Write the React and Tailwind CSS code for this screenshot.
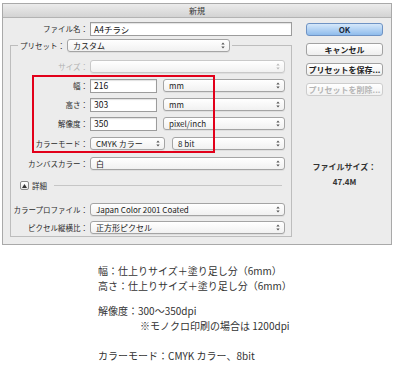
const font = { fontFamily: '"Noto Sans CJK JP", "Liberation Sans", sans-serif' };

function Arrows({ dim }) {
  const c = dim ? "#b8b8b8" : "#555";
  return (
    <svg width="4" height="7" viewBox="0 0 4 7" className="shrink-0">
      <path d="M0.3 2.6 L2 0.6 L3.7 2.6 Z" fill={c} />
      <path d="M0.3 4.4 L2 6.4 L3.7 4.4 Z" fill={c} />
    </svg>
  );
}

function Select({ w, text, dim }) {
  return (
    <div
      className={`${w} h-[13px] rounded-[3px] border ${
        dim ? "border-[#c9c9c9] text-[#aaa]" : "border-[#a4a4a4] text-[#222]"
      } bg-gradient-to-b from-white to-[#f1f1f1] shadow-[0_1px_0_rgba(0,0,0,0.06)] flex items-center justify-between pl-[5px] pr-[4px] text-[8px] leading-none whitespace-nowrap`}
    >
      <span>{text}</span>
      <Arrows dim={dim} />
    </div>
  );
}

function Input({ w, value }) {
  return (
    <div
      className={`${w} h-[14px] border border-[#9c9c9c] bg-white shadow-[inset_0_1px_1px_rgba(0,0,0,0.12)] flex items-center pl-[3px] text-[8.5px] leading-none text-[#111]`}
    >
      {value}
    </div>
  );
}

function Label({ w, children, dim }) {
  return (
    <div
      className={`${w} shrink-0 text-right text-[7.5px] leading-none pr-[1px] whitespace-nowrap ${
        dim ? "text-[#b0b0b0]" : "text-[#2a2a2a]"
      }`}
    >
      {children}
    </div>
  );
}

function Row({ mt, label, dim, children }) {
  return (
    <div className={`flex items-center h-[13px] ${mt}`}>
      <Label w="w-[78px]" dim={dim}>
        {label}
      </Label>
      <div className="flex items-center ml-[1px]">{children}</div>
    </div>
  );
}

function Button({ children, primary, dim }) {
  return (
    <div
      className={`h-[13px] w-[77px] rounded-[3px] border flex items-center justify-center text-[8px] leading-none font-bold ${
        primary
          ? "border-[#6f93c4] bg-gradient-to-b from-[#d6e8fa] to-[#8fbcec] text-[#1b2a3c]"
          : dim
          ? "border-[#cdcdcd] bg-gradient-to-b from-white to-[#f2f2f2] text-[#b5b5b5]"
          : "border-[#a2a2a2] bg-gradient-to-b from-white to-[#efefef] text-[#222]"
      }`}
    >
      {children}
    </div>
  );
}

export default function App() {
  return (
    <div className="w-[396px] h-[367px] bg-white overflow-hidden relative" style={font}>
      {/* dialog */}
      <div className="ml-[2px] mt-[3px] w-[390px] h-[242px] border border-[#a9a9a9] bg-[#ececec] flex flex-col">
        <div className="h-[14px] border-b border-[#b3b3b3] bg-gradient-to-b from-[#ececec] to-[#d3d3d3] flex items-center justify-center text-[8px] leading-none text-[#333]">
          新規
        </div>

        <div className="flex">
          {/* left column */}
          <div className="w-[290px] pt-[4px]">
            <div className="flex items-center h-[14px]">
              <Label w="w-[86px]">ファイル名：</Label>
              <div className="ml-[1px]">
                <Input w="w-[202px]" value="A4チラシ" />
              </div>
            </div>

            <fieldset className="ml-[7px] mt-[3px] w-[282px] border border-[#bdbdbd] pb-[2px]">
              <legend className="ml-[7px] px-[2px] flex items-center">
                <span className="text-[7.5px] leading-none text-[#2a2a2a]">プリセット：</span>
                <div className="ml-[2px]">
                  <Select w="w-[163px]" text="カスタム" />
                </div>
              </legend>

              <Row mt="mt-[8px]" label="サイズ：" dim>
                <Select w="w-[195px]" text="" dim />
              </Row>
              <Row mt="mt-[6px]" label="幅：">
                <Input w="w-[67px]" value="216" />
                <div className="ml-[6px]">
                  <Select w="w-[122px]" text="mm" />
                </div>
              </Row>
              <Row mt="mt-[6px]" label="高さ：">
                <Input w="w-[67px]" value="303" />
                <div className="ml-[6px]">
                  <Select w="w-[122px]" text="mm" />
                </div>
              </Row>
              <Row mt="mt-[6px]" label="解像度：">
                <Input w="w-[67px]" value="350" />
                <div className="ml-[6px]">
                  <Select w="w-[122px]" text="pixel/inch" />
                </div>
              </Row>
              <Row mt="mt-[7px]" label="カラーモード：">
                <Select w="w-[75px]" text="CMYK カラー" />
                <div className="ml-[7px]">
                  <Select w="w-[113px]" text="8 bit" />
                </div>
              </Row>
              <Row mt="mt-[7px]" label="カンバスカラー：">
                <Select w="w-[195px]" text="白" />
              </Row>

              <div className="flex items-center h-[13px] mt-[9px]">
                <div className="ml-[9px] w-[9px] h-[9px] rounded-[2px] border border-[#8a8a8a] bg-gradient-to-b from-white to-[#e8e8e8] flex items-center justify-center">
                  <svg width="5" height="4" viewBox="0 0 5 4">
                    <path d="M0 4 L2.5 0 L5 4 Z" fill="#333" />
                  </svg>
                </div>
                <span className="ml-[3px] text-[7.5px] leading-none text-[#2a2a2a]">詳細</span>
                <div className="ml-[7px] w-[228px] h-px bg-[#c6c6c6]" />
              </div>

              <Row mt="mt-[11px]" label="カラープロファイル：">
                <Select w="w-[195px]" text="Japan Color 2001 Coated" />
              </Row>
              <Row mt="mt-[5px]" label="ピクセル縦横比：">
                <Select w="w-[195px]" text="正方形ピクセル" />
              </Row>
            </fieldset>
          </div>

          {/* right column */}
          <div className="ml-[13px] w-[77px] pt-[5px] flex flex-col">
            <Button primary>OK</Button>
            <div className="mt-[7px]">
              <Button>キャンセル</Button>
            </div>
            <div className="mt-[7px]">
              <Button>プリセットを保存...</Button>
            </div>
            <div className="mt-[7px]">
              <Button dim>プリセットを削除...</Button>
            </div>
            <div className="mt-[67px] text-center text-[8px] leading-none font-bold text-[#333]">
              ファイルサイズ：
            </div>
            <div className="mt-[7px] text-center text-[8px] leading-none font-bold text-[#333]">
              47.4M
            </div>
          </div>
        </div>
      </div>

      {/* red annotation box */}
      <div className="absolute left-[32px] top-[75px] w-[183px] h-[78px] border-2 border-[#e2001a]" />

      {/* notes */}
      <div className="ml-[98px] mt-[18px] text-[10px] leading-[15px] text-[#333]">
        <div>幅：仕上りサイズ＋塗り足し分（6mm）</div>
        <div>高さ：仕上りサイズ＋塗り足し分（6mm）</div>
        <div className="mt-[10px]">解像度：300〜350dpi</div>
        <div className="ml-[42px]">※モノクロ印刷の場合は 1200dpi</div>
        <div className="mt-[15px]">カラーモード：CMYK カラー、8bit</div>
      </div>
    </div>
  );
}
